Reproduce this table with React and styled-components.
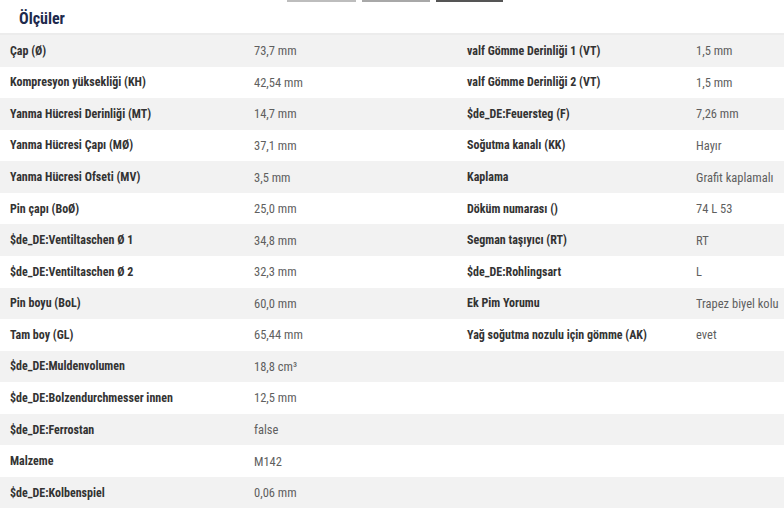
import React from "react";
import styled, { createGlobalStyle } from "styled-components";

const Global = createGlobalStyle`
  html, body { margin: 0; padding: 0; background: #fff; }
  body { font-family: Roboto, "Liberation Sans", sans-serif; overflow: hidden; }
`;

const Page = styled.div`
  width: 784px;
  height: 513px;
  overflow: hidden;
  display: flex;
  flex-direction: column;
`;

const TopTabs = styled.div`
  display: flex;
  gap: 6px;
  padding-left: 287px;
  height: 2px;
`;

const TabStub = styled.div`
  width: ${(p) => p.$w}px;
  height: 2px;
  background: ${(p) => p.$c};
`;

const Heading = styled.h2`
  margin: 0;
  padding: 8px 0 0 19px;
  height: 23px;
  font-size: 16px;
  font-weight: 700;
  font-stretch: 80%;
  color: #1d2a4d;
  line-height: 18px;
  border-bottom: 2px solid #ececec;
  box-shadow: 0 1px 1px rgba(0,0,0,0.03);
`;

const Table = styled.div`
  display: grid;
  grid-template-columns: 244px 213px 229px 1fr;
  grid-auto-rows: 31.57px;
`;

const Row = styled.div`
  display: contents;
`;

const Cell = styled.div`
  display: flex;
  align-items: center;
  padding-left: 10px;
  background: ${(p) => (p.$odd ? "#f2f2f2" : "#fff")};
  font-size: ${(p) => (p.$label ? "12px" : "12.5px")};
  font-stretch: 80%;
  white-space: nowrap;
  overflow: hidden;
  color: ${(p) => (p.$label ? "#333" : "#5f5f5f")};
  font-weight: ${(p) => (p.$label ? 700 : 400)};
`;

const left = [
  ["Çap (Ø)", "73,7 mm"],
  ["Kompresyon yüksekliği (KH)", "42,54 mm"],
  ["Yanma Hücresi Derinliği (MT)", "14,7 mm"],
  ["Yanma Hücresi Çapı (MØ)", "37,1 mm"],
  ["Yanma Hücresi Ofseti (MV)", "3,5 mm"],
  ["Pin çapı (BoØ)", "25,0 mm"],
  ["$de_DE:Ventiltaschen Ø 1", "34,8 mm"],
  ["$de_DE:Ventiltaschen Ø 2", "32,3 mm"],
  ["Pin boyu (BoL)", "60,0 mm"],
  ["Tam boy (GL)", "65,44 mm"],
  ["$de_DE:Muldenvolumen", "18,8 cm³"],
  ["$de_DE:Bolzendurchmesser innen", "12,5 mm"],
  ["$de_DE:Ferrostan", "false"],
  ["Malzeme", "M142"],
  ["$de_DE:Kolbenspiel", "0,06 mm"],
];

const right = [
  ["valf Gömme Derinliği 1 (VT)", "1,5 mm"],
  ["valf Gömme Derinliği 2 (VT)", "1,5 mm"],
  ["$de_DE:Feuersteg (F)", "7,26 mm"],
  ["Soğutma kanalı (KK)", "Hayır"],
  ["Kaplama", "Grafit kaplamalı"],
  ["Döküm numarası ()", "74 L 53"],
  ["Segman taşıyıcı (RT)", "RT"],
  ["$de_DE:Rohlingsart", "L"],
  ["Ek Pim Yorumu", "Trapez biyel kolu"],
  ["Yağ soğutma nozulu için gömme (AK)", "evet"],
];

export default function App() {
  return (
    <Page>
      <Global />
      <TopTabs>
        <TabStub $w={69} $c="#bdbdbd" />
        <TabStub $w={68} $c="#a8a8a8" />
        <TabStub $w={67} $c="#555" />
      </TopTabs>
      <Heading>Ölçüler</Heading>
      <Table>
        {left.map((l, i) => {
          const r = right[i] || ["", ""];
          const odd = i % 2 === 0;
          return (
            <Row key={i}>
              <Cell $odd={odd} $label>{l[0]}</Cell>
              <Cell $odd={odd}>{l[1]}</Cell>
              <Cell $odd={odd} $label>{r[0]}</Cell>
              <Cell $odd={odd}>{r[1]}</Cell>
            </Row>
          );
        })}
      </Table>
    </Page>
  );
}
